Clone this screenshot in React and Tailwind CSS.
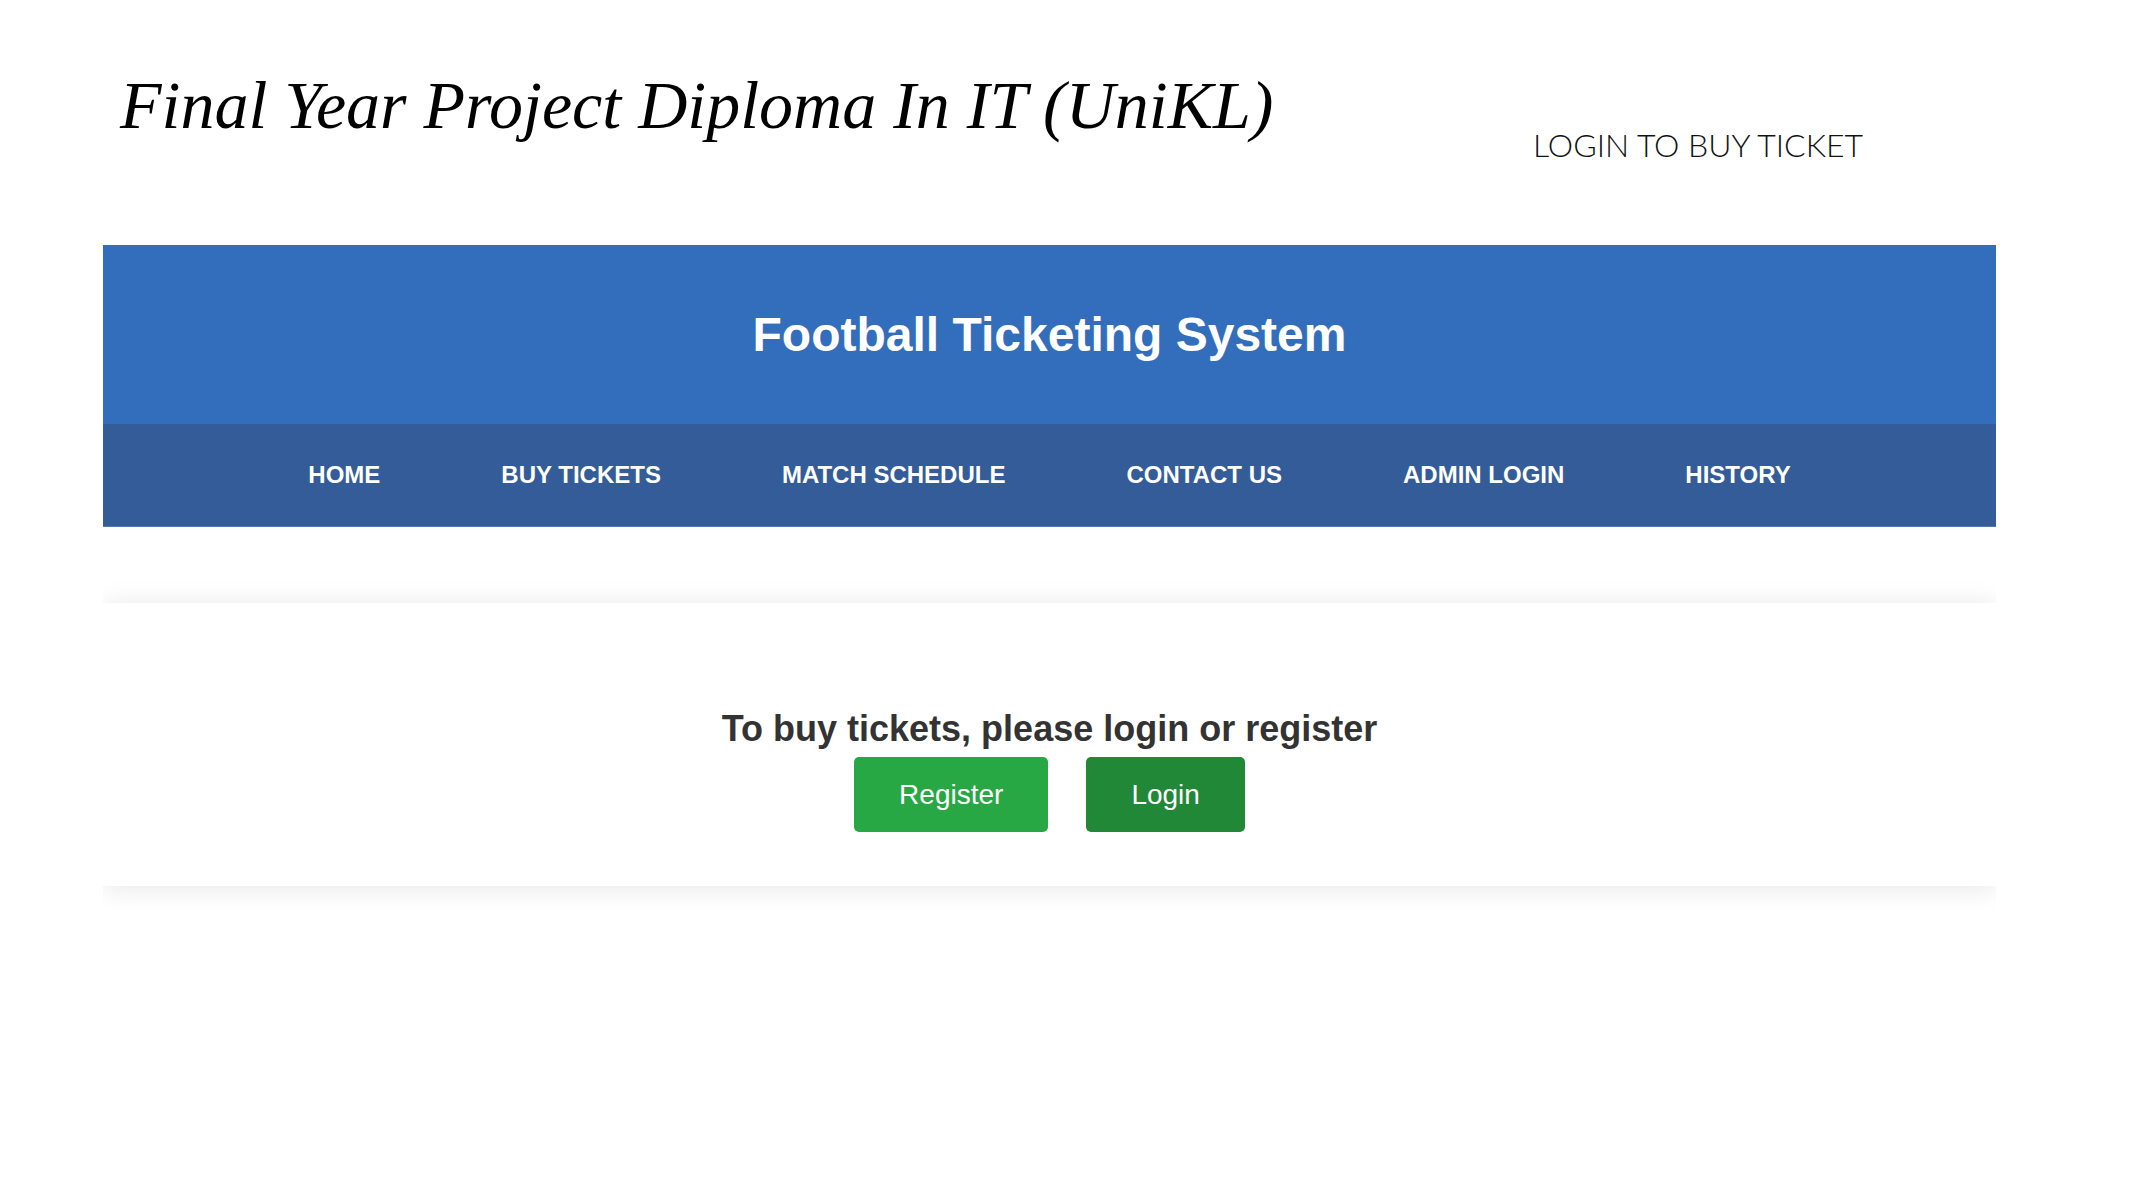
import React from "react";

const navItems = [
  "HOME",
  "BUY TICKETS",
  "MATCH SCHEDULE",
  "CONTACT US",
  "ADMIN LOGIN",
  "HISTORY",
];

const App = () => {
  return (
    <div className="w-full h-[1200px] bg-white overflow-hidden">
      {/* SLIDE HEADER */}
      <div className="h-[245px] flex items-start">
        <div className="w-[1533px] pl-[120px] pt-[71px]">
          <h1
            className="text-[68px] leading-none italic text-black whitespace-nowrap"
            style={{ fontFamily: '"Liberation Serif", "DejaVu Serif", serif' }}
          >
            Final Year Project Diploma In IT (UniKL)
          </h1>
        </div>
        <div
          className="pt-[129px] text-[32px] leading-none font-light text-[#111] whitespace-nowrap"
          style={{ fontFamily: 'Lato, "Open Sans", sans-serif' }}
        >
          LOGIN TO BUY TICKET
        </div>
      </div>

      {/* SCREENSHOT OF THE SITE */}
      <div
        className="ml-[103px] w-[1893px] overflow-hidden"
        style={{ fontFamily: '"Liberation Sans", Arial, sans-serif' }}
      >
        <header className="h-[179px] bg-[#336ebc] flex items-center justify-center">
          <h2 className="text-[48px] leading-none font-bold text-white">
            Football Ticketing System
          </h2>
        </header>

        <nav className="h-[103px] bg-[#335c99] border-b border-[#5279b3] flex items-center justify-center gap-[121px]">
          {navItems.map((item) => (
            <a
              key={item}
              className="text-[24px] leading-none font-bold text-white whitespace-nowrap"
            >
              {item}
            </a>
          ))}
        </nav>

        <div className="pt-[76px] pb-[26px]">
          <section className="bg-white shadow-[0_2px_26px_rgba(0,0,0,0.1)] pt-[108px] pb-[54px] flex flex-col items-center">
            <p className="text-[36px] leading-none font-bold text-[#333]">
              To buy tickets, please login or register
            </p>
            <div className="mt-[10px] flex gap-[38px]">
              <button className="h-[75px] px-[45px] rounded-[5px] bg-[#28a745] text-white text-[28px] leading-none">
                Register
              </button>
              <button className="h-[75px] px-[45px] rounded-[5px] bg-[#218838] text-white text-[28px] leading-none">
                Login
              </button>
            </div>
          </section>
        </div>
      </div>
    </div>
  );
};

export default App;
